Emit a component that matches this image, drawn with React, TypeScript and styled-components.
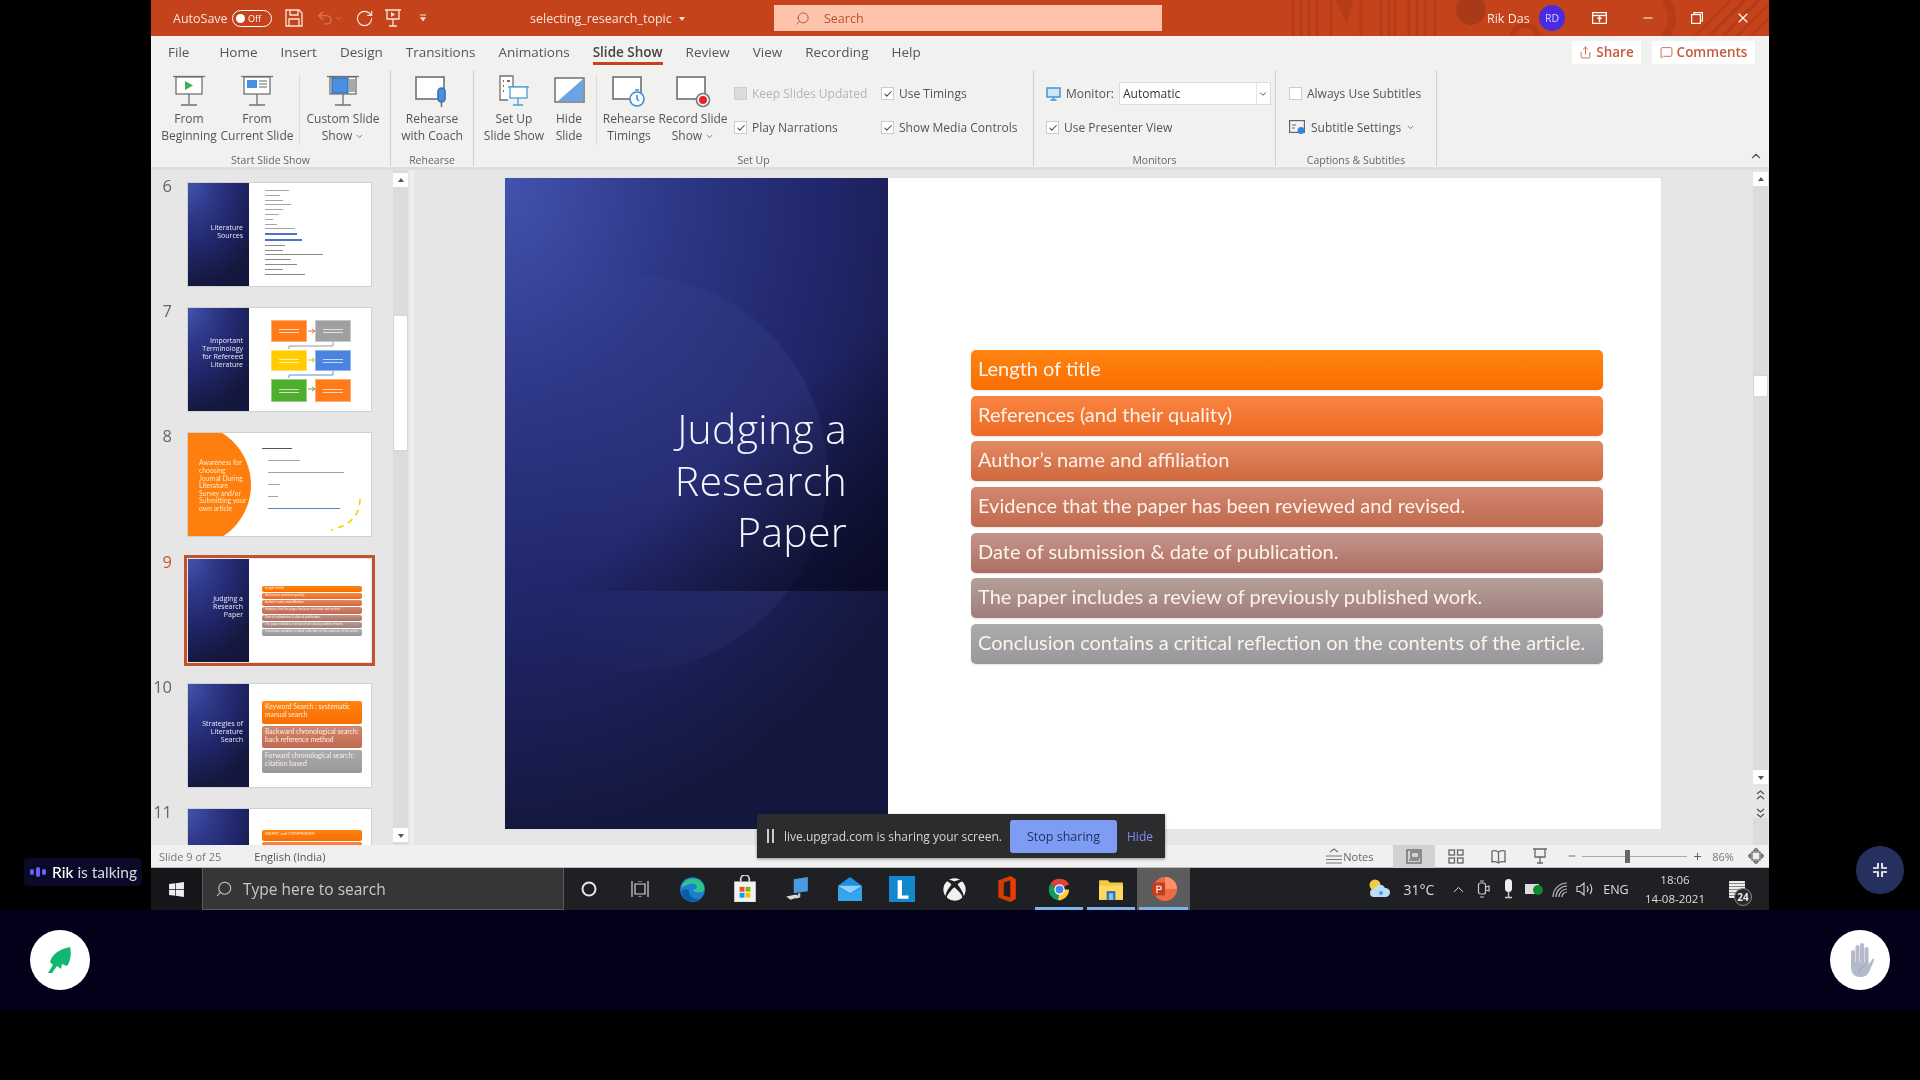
import styled, { createGlobalStyle } from "styled-components";
import { Search, Undo2, RotateCw, Minus, Plus, X, ChevronDown, ChevronUp, Check, MessageSquare, Share } from "lucide-react";
import { FaWindows, FaXbox } from "react-icons/fa";

const Global = createGlobalStyle`
  html, body { margin: 0; background: #000; overflow: hidden; }
  * { box-sizing: border-box; }
`;

const Screen = styled.div`
  width: 1920px;
  height: 1080px;
  background: #000;
  font-family: "Open Sans", "Liberation Sans", sans-serif;
  filter: blur(0.45px);
  overflow: hidden;
`;

const Stage = styled.div`
  display: flex;
  height: 910px;
`;

const Gutter = styled.div<{ $pad: number; $align: string }>`
  width: 151px;
  flex: none;
  display: flex;
  align-items: flex-end;
  justify-content: ${(p) => p.$align};
  padding: 0 ${(p) => (p.$align === "flex-end" ? "16px" : "0")} ${(p) => p.$pad}px 0;
`;

const Talking = styled.div`
  display: flex;
  align-items: center;
  gap: 6px;
  height: 28px;
  width: 118px;
  margin-left: 24px;
  padding-left: 6px;
  background: #0a0a28;
  border-radius: 4px;
  color: #d8d8e0;
  font: 400 15.5px Lato, sans-serif;
  white-space: nowrap;
  b { color: #fff; font-weight: 500; }
`;

const Dot = styled.i<{ $h: number }>`
  display: block;
  width: 4px;
  height: ${(p) => p.$h}px;
  border-radius: 3px;
  background: #6a63f5;
`;

const Dots = styled.span`
  display: flex;
  align-items: center;
  gap: 2px;
`;

const Collapse = styled.div`
  width: 48px;
  height: 48px;
  border-radius: 50%;
  background: #26305f;
  display: flex;
  align-items: center;
  justify-content: center;
`;

const Win = styled.div`
  width: 1618px;
  flex: none;
  display: flex;
  flex-direction: column;
  position: relative;
  background: #f1f1f0;
`;

/* title bar */
const TitleBar = styled.div`
  height: 36px;
  flex: none;
  position: relative;
  background: #c5431a;
  color: #f8e4dc;
  display: flex;
  align-items: center;
  font-size: 12.5px;
  padding-left: 22px;
  overflow: hidden;
`;

const Pattern = styled.svg`
  position: absolute;
  left: 1134px;
  top: 0;
`;

const AutoSave = styled.span`
  width: 59px;
`;

const Toggle = styled.span`
  width: 40px;
  height: 17px;
  border: 1.5px solid #fff;
  border-radius: 9px;
  display: flex;
  align-items: center;
  padding-left: 3px;
  gap: 3px;
  font-size: 9px;
  margin-right: 13px;
  color: #fff;
  &::before {
    content: "";
    width: 9px;
    height: 9px;
    border-radius: 50%;
    background: #fff;
  }
`;

const QatSlot = styled.span<{ $w: number; $dim?: boolean }>`
  width: ${(p) => p.$w}px;
  flex: none;
  display: flex;
  align-items: center;
  color: ${(p) => (p.$dim ? "#dc7f62" : "#f8e4dc")};
`;

const DocName = styled.span`
  margin-left: 104px;
  width: 244px;
  font-size: 12.5px;
  display: flex;
  align-items: center;
  gap: 7px;
  &::after {
    content: "";
    border: 3.5px solid transparent;
    border-top: 4px solid #f8e4dc;
    margin-top: 4px;
  }
`;

const SearchBox = styled.div`
  width: 388px;
  height: 26px;
  background: #fdc3ab;
  display: flex;
  align-items: center;
  gap: 14px;
  padding-left: 21px;
  color: #b8532f;
  font-size: 12.5px;
`;

const UserName = styled.span`
  margin-left: 325px;
  color: #fbe9e2;
  position: relative;
  font-size: 12.5px;
  width: 52px;
`;

const Avatar = styled.span`
  width: 26px;
  height: 26px;
  border-radius: 50%;
  background: #4a2be0;
  color: #d8d4ff;
  font-size: 10.5px;
  display: flex;
  align-items: center;
  justify-content: center;
  position: relative;
`;

const WinBtn = styled.span<{ $w: number }>`
  width: ${(p) => p.$w}px;
  display: flex;
  justify-content: flex-end;
  position: relative;
  color: #fff;
`;

/* tabs */
const Tabs = styled.div`
  height: 34px;
  flex: none;
  display: flex;
  align-items: center;
  padding: 0 0 2px 17px;
  gap: 23px;
  font-size: 13.5px;
  color: #4d4d4d;
  position: relative;
`;

const Tab = styled.span<{ $on?: boolean }>`
  position: relative;
  color: ${(p) => (p.$on ? "#444" : "#555")};
  font-weight: ${(p) => (p.$on ? 600 : 400)};
  &:first-child {
    margin-right: 7px;
  }
  ${(p) =>
    p.$on
      ? `&::after {
    content: "";
    position: absolute;
    left: 0;
    right: 0;
    bottom: -4px;
    height: 3px;
    background: #c5431a;
  }`
      : ""}
`;

const TabActions = styled.div`
  margin-left: auto;
  margin-right: 14px;
  display: flex;
  gap: 11px;
`;

const TabAction = styled.span<{ $w: number }>`
  width: ${(p) => p.$w}px;
  height: 23px;
  background: #fff;
  color: #c65a3c;
  font-weight: 600;
  font-size: 13.5px;
  display: flex;
  align-items: center;
  justify-content: center;
  gap: 4px;
`;

/* ribbon */
const Ribbon = styled.div`
  height: 100px;
  flex: none;
  display: flex;
  position: relative;
  font-size: 12px;
  color: #555;
  border-bottom: 3px solid #dedede;
`;

const Group = styled.div<{ $w: number }>`
  width: ${(p) => p.$w}px;
  flex: none;
  display: flex;
  flex-direction: column;
  height: 96px;
  border-right: 1px solid #cfcfcf;
`;

const GroupBody = styled.div<{ $pad: number }>`
  height: 83px;
  flex: none;
  display: flex;
  padding: 2px 0 0 ${(p) => p.$pad}px;
`;

const GroupName = styled.div`
  height: 13px;
  line-height: 15px;
  text-align: center;
  font-size: 10.5px;
  color: #666;
`;

const BigBtn = styled.div<{ $w: number }>`
  width: ${(p) => p.$w}px;
  flex: none;
  display: flex;
  flex-direction: column;
  align-items: center;
  white-space: nowrap;
`;

const BtnLabel = styled.div`
  text-align: center;
  line-height: 17px;
  svg {
    vertical-align: -1px;
  }
`;

const IconSlot = styled.div`
  height: 38px;
  padding-top: 3px;
`;

const Seam = styled.div<{ $m: number }>`
  width: 1px;
  height: 70px;
  margin: 3px ${(p) => p.$m}px 0 ${(p) => p.$m}px;
  background: #dcdcdc;
  flex: none;
`;

const CheckCols = styled.div<{ $shift?: number }>`
  display: flex;
  flex-direction: column;
  gap: 15px;
  padding-top: 12px;
  margin-left: ${(p) => p.$shift ?? 0}px;
`;

const CheckRow = styled.div`
  display: flex;
  height: 19px;
`;

const CheckItem = styled.label<{ $w?: number; $off?: boolean }>`
  display: flex;
  align-items: center;
  gap: 5px;
  height: 19px;
  white-space: nowrap;
  width: ${(p) => (p.$w ? `${p.$w}px` : "auto")};
  color: ${(p) => (p.$off ? "#b4b4b4" : "#555")};
`;

const Box = styled.span<{ $off?: boolean }>`
  width: 13px;
  height: 13px;
  flex: none;
  background: ${(p) => (p.$off ? "#dcdcdc" : "#fff")};
  border: 1px solid #cdcdcd;
  display: flex;
  align-items: center;
  justify-content: center;
  color: #444;
`;

const MonitorRow = styled.div`
  display: flex;
  align-items: center;
  gap: 5px;
  height: 23px;
  margin: -2px 0;
  color: #555;
`;

const Select = styled.div`
  width: 152px;
  height: 23px;
  background: #fff;
  border: 1px solid #dcdcdc;
  display: flex;
  align-items: center;
  justify-content: space-between;
  padding-left: 3px;
  color: #333;
`;

const SelectArrow = styled.span`
  width: 14px;
  height: 100%;
  border-left: 1px solid #e2e2e2;
  display: flex;
  align-items: center;
  justify-content: center;
`;

const RibbonChevron = styled.span`
  position: absolute;
  right: 6px;
  bottom: 0;
  color: #555;
`;

/* workspace */
const Workspace = styled.div`
  flex: 1;
  display: flex;
  min-height: 0;
  background: #e6e6e6;
`;

const ThumbPanel = styled.div`
  width: 263px;
  flex: none;
  display: flex;
  border-right: 4px solid #efefef;
`;

const ThumbList = styled.div`
  width: 242px;
  flex: none;
  padding-top: 13px;
  overflow: hidden;
`;

const ThumbRow = styled.div`
  display: flex;
  height: 125.2px;
`;

const ThumbNum = styled.div<{ $on?: boolean }>`
  width: 21px;
  margin: -4px 16px 0 0;
  text-align: right;
  font-size: 16.5px;
  line-height: 14px;
  color: ${(p) => (p.$on ? "#c5512d" : "#666")};
`;

const Thumb = styled.div<{ $on?: boolean }>`
  width: 183px;
  height: 103px;
  flex: none;
  display: flex;
  position: relative;
  background: #fff;
  outline: ${(p) => (p.$on ? "3px solid #c5512d" : "1px solid #d0d0d0")};
  outline-offset: ${(p) => (p.$on ? "1px" : "0")};
`;

const bluePanel = `
  background: radial-gradient(ellipse 130% 100% at 0 0, #4352ad 0, #2d3786 35%, #20266a 65%, #14183f 100%);
`;

const ThumbSide = styled.div<{ $top: number }>`
  width: 61px;
  flex: none;
  ${bluePanel}
  color: #e8eaf5;
  font-size: 7px;
  line-height: 8px;
  text-align: right;
  padding: ${(p) => p.$top}px 6px 0 2px;
`;

const ThumbBody = styled.div<{ $top: number; $left: number; $right: number; $gap?: number }>`
  flex: 1;
  display: flex;
  flex-direction: column;
  gap: ${(p) => p.$gap ?? 0}px;
  padding: ${(p) => p.$top}px ${(p) => p.$right}px 0 ${(p) => p.$left}px;
  overflow: hidden;
`;

const MiniLine = styled.i<{ $w: number; $h?: number; $c?: string; $indent?: number }>`
  display: block;
  flex: none;
  width: ${(p) => p.$w}px;
  height: ${(p) => p.$h ?? 1}px;
  margin-left: ${(p) => p.$indent ?? 0}px;
  background: ${(p) => p.$c ?? "#a4a4a4"};
`;

const MiniBar = styled.div<{ $top: string; $bottom: string; $h: number; $size: number }>`
  height: ${(p) => p.$h}px;
  flex: none;
  border-radius: 2px;
  background: linear-gradient(${(p) => p.$top}, ${(p) => p.$bottom});
  color: #fbeee6;
  font: 400 ${(p) => p.$size}px/1.25 Lato, sans-serif;
  padding: 1px 3px;
  overflow: hidden;
  white-space: ${(p) => (p.$size < 4 ? "nowrap" : "normal")};
`;

const FlowGrid = styled.div`
  display: grid;
  grid-template-columns: 36px 36px;
  grid-template-rows: 22px 21px 23px;
  gap: 8px;
`;

const FlowBox = styled.div<{ $c: string }>`
  background: ${(p) => p.$c};
  border: 1px solid #ffffff66;
  display: flex;
  flex-direction: column;
  align-items: center;
  justify-content: center;
  gap: 2px;
  &::before, &::after {
    content: "";
    width: 60%;
    height: 1px;
    background: #ffffffb0;
  }
`;

const FlowArrows = styled.svg`
  position: absolute;
  left: 83px;
  top: 12px;
`;

const OrangeShape = styled.div`
  width: 64px;
  flex: none;
  background: #ff7f0e;
  clip-path: circle(61.4px at 1.6px 51.5px);
  color: #ffe9cc;
  font: 400 6.8px/7.6px Lato, sans-serif;
  padding: 26px 0 0 11px;
  white-space: nowrap;
`;

const DashArc = styled.svg`
  position: absolute;
  right: 8px;
  bottom: 4px;
`;

const Scrollbar = styled.div<{ $gap?: number; $bottom: number; $top: number; $lift?: number }>`
  width: 15px;
  flex: none;
  display: flex;
  flex-direction: column;
  padding-top: ${(p) => p.$top}px;
  padding-bottom: ${(p) => p.$bottom}px;
  background: #dcdcdc;
  margin-left: ${(p) => p.$gap ?? 0}px;
  margin-top: ${(p) => -(p.$lift ?? 0)}px;
`;

const ScrollBtn = styled.div<{ $down?: boolean; $h?: number }>`
  height: ${(p) => p.$h ?? 14}px;
  flex: none;
  background: #fff;
  display: flex;
  align-items: center;
  justify-content: center;
  &::before {
    content: "";
    border: 3.5px solid transparent;
    ${(p) => (p.$down ? "border-top: 4px solid #555; margin-top: 4px;" : "border-bottom: 4px solid #555; margin-bottom: 4px;")}
  }
`;

const ScrollThumb = styled.div<{ $at: number; $size: number }>`
  margin-top: ${(p) => p.$at}px;
  height: ${(p) => p.$size}px;
  flex: none;
  background: #fff;
  border: 1px solid #d6d6d6;
`;

const ScrollFill = styled.div`
  flex: 1;
`;

const ScrollPair = styled.div`
  display: flex;
  flex-direction: column;
  gap: 8px;
  padding-top: 6px;
  background: #e6e6e6;
  align-items: center;
`;

const Editor = styled.div`
  flex: 1;
  display: flex;
  padding: 7px 1px 0 90px;
  min-width: 0;
`;

const Slide = styled.div`
  width: 1158px;
  height: 653px;
  flex: none;
  display: flex;
  background: #fff;
  border: 1px solid #e2e2e2;
`;

const SlideSide = styled.div`
  width: 383px;
  flex: none;
  position: relative;
  overflow: hidden;
  ${bluePanel}
  &::before {
    content: "";
    position: absolute;
    left: -74px;
    top: 97px;
    width: 396px;
    height: 396px;
    border-radius: 50%;
    background: linear-gradient(90deg, transparent 35%, rgba(120, 135, 220, 0.1) 100%);
  }
  &::after {
    content: "";
    position: absolute;
    left: 0;
    right: 0;
    top: 0;
    height: 413px;
    background: linear-gradient(140deg, transparent 62%, #090a24 100%);
  }
`;

const SlideTitle = styled.h1`
  position: relative;
  z-index: 1;
  margin: 0;
  padding: 225px 41px 0 0;
  text-align: right;
  color: #f4f5fb;
  font: 300 41px/51.5px "Open Sans", sans-serif;
  letter-spacing: 0.3px;
`;

const SlideBody = styled.div`
  flex: 1;
  display: flex;
  flex-direction: column;
  gap: 5.7px;
  padding: 172px 58px 0 83px;
`;

const Bar = styled.div<{ $top: string; $bottom: string }>`
  height: 40px;
  flex: none;
  border-radius: 5px;
  padding: 0 0 4px 7px;
  display: flex;
  align-items: center;
  background: linear-gradient(${(p) => p.$top}, ${(p) => p.$bottom});
  box-shadow: 0 1px 2px rgba(0, 0, 0, 0.12);
  color: #fdf3ec;
  font: 400 20px Lato, sans-serif;
`;

/* status bar */
const StatusBar = styled.div`
  height: 23px;
  flex: none;
  display: flex;
  align-items: center;
  padding-left: 8px;
  font-size: 11px;
  color: #777;
  background: #f0f0f0;
  border-bottom: 1px solid #bbb;
`;

const StatusLang = styled.span`
  margin-left: 33px;
  width: 1071px;
  color: #555;
`;

const Notes = styled.span`
  width: 68px;
  display: flex;
  align-items: center;
  color: #666;
`;

const ViewBtn = styled.span<{ $on?: boolean }>`
  width: 42px;
  height: 23px;
  display: flex;
  align-items: center;
  justify-content: center;
  background: ${(p) => (p.$on ? "#d2d2d2" : "transparent")};
  color: #666;
`;

const Zoomer = styled.div`
  display: flex;
  align-items: center;
  color: #555;
  gap: 5px;
  margin-left: 6px;
`;

const ZoomTrack = styled.span`
  width: 105px;
  height: 1px;
  background: #aaa;
  position: relative;
  &::after {
    content: "";
    position: absolute;
    left: 43px;
    top: -6px;
    width: 5px;
    height: 13px;
    background: #666;
  }
`;

const ZoomPct = styled.span`
  margin-left: 9px;
  width: 36px;
`;

/* taskbar */
const Taskbar = styled.div`
  height: 42px;
  flex: none;
  display: flex;
  align-items: stretch;
  background: #1f2023;
  color: #e0e0e0;
`;

const StartBtn = styled.div`
  width: 51px;
  display: flex;
  align-items: center;
  justify-content: center;
  background: #16171a;
`;

const TaskSearch = styled.div`
  width: 362px;
  display: flex;
  align-items: center;
  gap: 10px;
  padding-left: 12px;
  background: #373535;
  border: 1px solid #5a5a5a;
  border-top: none;
  color: #c9c9c9;
  font-size: 15.5px;
`;

const Pins = styled.div`
  display: flex;
`;

const Pin = styled.div<{ $w: number; $on?: boolean; $bar?: boolean }>`
  width: ${(p) => p.$w}px;
  flex: none;
  display: flex;
  align-items: center;
  justify-content: center;
  position: relative;
  background: ${(p) => (p.$on ? "#5c5c5c" : "transparent")};
  ${(p) =>
    p.$bar
      ? `&::after {
    content: "";
    position: absolute;
    left: 2px;
    right: 2px;
    bottom: 0;
    height: 3px;
    background: #7ab4ea;
  }`
      : ""}
`;

const Tray = styled.div`
  margin-left: auto;
  display: flex;
  align-items: center;
  padding-right: 24px;
  font-size: 14px;
  color: #dcdcdc;
`;

const TraySlot = styled.span<{ $w: number }>`
  width: ${(p) => p.$w}px;
  flex: none;
  display: flex;
  align-items: center;
  justify-content: center;
  white-space: nowrap;
`;

const EngLabel = styled(TraySlot)`
  font-size: 12.5px;
  padding-left: 4px;
`;

const Clock = styled.div`
  width: 90px;
  flex: none;
  text-align: center;
  font-size: 11.5px;
  line-height: 19px;
`;

const Badge = styled.span`
  position: absolute;
  right: -7px;
  bottom: -8px;
  width: 18px;
  height: 18px;
  border-radius: 50%;
  background: #2b2b2f;
  border: 1px solid #888;
  font-size: 10px;
  font-weight: 700;
  color: #eee;
  display: flex;
  align-items: center;
  justify-content: center;
`;

const NoteIcon = styled.span`
  position: relative;
  width: 16px;
  height: 17px;
  margin-left: 9px;
  background: repeating-linear-gradient(#eee 0 2px, #888 2px 3px);
  border-radius: 1px;
`;

/* share bar */
const ShareBar = styled.div`
  position: absolute;
  left: 606px;
  top: 814px;
  width: 408px;
  height: 44px;
  display: flex;
  align-items: center;
  background: #2c2c2e;
  box-shadow: 0 1px 3px rgba(0, 0, 0, 0.4);
  color: #d5d5d5;
  font-size: 12px;
  padding-left: 10px;
`;

const Pause = styled.span`
  width: 7px;
  height: 14px;
  border-left: 2px solid #ccc;
  border-right: 2px solid #ccc;
  margin-right: 10px;
`;

const ShareText = styled.span`
  width: 226px;
  white-space: nowrap;
`;

const StopBtn = styled.span`
  width: 107px;
  height: 33px;
  border-radius: 3px;
  background: #7f9cf5;
  color: #23305f;
  font-size: 12.5px;
  display: flex;
  align-items: center;
  justify-content: center;
`;

const HideLink = styled.span`
  margin-left: 10px;
  color: #7f8ff0;
  font-size: 12px;
`;

/* bottom band */
const Band = styled.div`
  height: 100px;
  background: #03001a;
  display: flex;
  align-items: center;
  justify-content: space-between;
  padding: 0 30px;
`;

const RoundBtn = styled.div`
  width: 60px;
  height: 60px;
  border-radius: 50%;
  background: #fff;
  display: flex;
  align-items: center;
  justify-content: center;
`;

const tabs = ["File", "Home", "Insert", "Design", "Transitions", "Animations", "Slide Show", "Review", "View", "Recording", "Help"];

const bars = [
  { text: "Length of title", top: "#ff8412", bottom: "#f96e00" },
  { text: "References (and their quality)", top: "#f98443", bottom: "#ee6a22" },
  { text: "Author’s name and affiliation", top: "#e28a62", bottom: "#d0673d" },
  { text: "Evidence that the paper has been reviewed and revised.", top: "#d38770", bottom: "#bf6a4f" },
  { text: "Date of submission & date of publication.", top: "#c5958b", bottom: "#ae6e62" },
  { text: "The paper includes a review of previously published work.", top: "#b3a199", bottom: "#a27d7a" },
  { text: "Conclusion contains a critical reflection on the contents of the article.", top: "#ababad", bottom: "#98989c" },
];

const listLines = [24, 15, 18, 26, 18, 14, 8, 12, 30];
const listLinesB = [20, 18, 58, 26, 32, 18, 40];

const Board = ({ children }: { children?: React.ReactNode }) => (
  <svg width="34" height="32" viewBox="0 0 34 32" fill="none" stroke="#707070" strokeWidth="1.3">
    <path d="M1 1.5h32" />
    <rect x="4" y="2" width="26" height="17" fill="#fff" />
    <path d="M17 19v11M9 30h16" />
    {children}
  </svg>
);

const Frame = ({ children }: { children?: React.ReactNode }) => (
  <svg width="36" height="34" viewBox="0 0 36 34" fill="none" stroke="#707070" strokeWidth="1.6">
    <rect x="2" y="2" width="28" height="22" fill="#fff" />
    {children}
  </svg>
);

const DoubleArrow = ({ down }: { down?: boolean }) => (
  <svg width="9" height="10" viewBox="0 0 9 10" fill="none" stroke="#555" strokeWidth="1.3">
    <path d={down ? "M1 1l3.500 3L8 1M1 6l3.500 3L8 6" : "M1 4l3.500-3L8 4M1 9l3.500-3L8 9"} />
  </svg>
);

const Chrome = () => (
  <svg width="25" height="25" viewBox="0 0 24 24">
    <path d="M12 12 3 7a10.500 10.500 0 0 1 18.200 0z" fill="#db4437" />
    <path d="M12 12 3 7a10.500 10.500 0 0 0 7.600 15.400z" fill="#0f9d58" />
    <path d="M12 12h9.200a10.500 10.500 0 0 1-10.600 10.400z" fill="#ffcd40" />
    <circle cx="12" cy="12" r="5" fill="#fff" />
    <circle cx="12" cy="12" r="3.800" fill="#4285f4" />
  </svg>
);

const Edge = () => (
  <svg width="27" height="27" viewBox="0 0 24 24">
    <circle cx="12" cy="12" r="11" fill="#1b7fd4" />
    <path d="M2 10C4 2 14 0 20 5c3 3 3 8 1 9-3 1-8 1-9-2 5 0 5-4 1-5-5-1-9 3-11 3z" fill="#2fc48d" />
    <path d="M9 14c0 4 4 7 9 6-5 5-14 3-16-6 2-3 7-3 7 0z" fill="#0c59a4" />
  </svg>
);

const Store = () => (
  <svg width="26" height="28" viewBox="0 0 24 26">
    <path d="M8 6V4a4 4 0 0 1 8 0v2" fill="none" stroke="#ddd" strokeWidth="1.6" />
    <rect x="2" y="6" width="20" height="19" fill="#f2f2f2" />
    <rect x="7" y="11" width="4.500" height="4.500" fill="#f25022" />
    <rect x="12.500" y="11" width="4.500" height="4.500" fill="#7fba00" />
    <rect x="7" y="16.500" width="4.500" height="4.500" fill="#00a4ef" />
    <rect x="12.500" y="16.500" width="4.500" height="4.500" fill="#ffb900" />
  </svg>
);

const MyPc = () => (
  <svg width="26" height="26" viewBox="0 0 24 24">
    <path d="M9 3 22 1v13L9 16z" fill="#4a9be0" />
    <path d="M14 16v3l-3 1" stroke="#ccc" strokeWidth="2" fill="none" />
    <path d="M2 19l9-2 4 2-9 3z" fill="#d8d8d8" />
  </svg>
);

const Mail = () => (
  <svg width="26" height="26" viewBox="0 0 24 24">
    <path d="M1 9 12 1l11 8v14H1z" fill="#1f8fe0" />
    <path d="M1 9l11 7 11-7" fill="#8ed0fb" />
    <path d="M1 10l11 7 11-7v13H1z" fill="#35a6ee" />
  </svg>
);

const Tile = () => (
  <svg width="26" height="26" viewBox="0 0 24 24">
    <rect width="24" height="24" fill="#1488cc" />
    <path d="M8 4h4v14h6v3H8z" fill="#fff" />
  </svg>
);

const Office = () => (
  <svg width="22" height="28" viewBox="0 0 20 26">
    <path d="M2 5 13 1l5 3v18l-5 3-11-4z" fill="#d83b01" />
    <path d="M13 1l5 3v18l-5 3z" fill="#eb3c00" />
    <path d="M7 7l6-2v16l-6-2z" fill="#1f2023" />
  </svg>
);

const Explorer = () => (
  <svg width="26" height="25" viewBox="0 0 24 23">
    <path d="M1 3h8l2 2h12v16H1z" fill="#f5c842" />
    <rect x="1" y="8" width="22" height="13" fill="#ffd95e" />
    <rect x="8" y="13" width="8" height="8" fill="#2a6fb5" />
    <rect x="10" y="15" width="4" height="6" fill="#8ec3ee" />
  </svg>
);

const PowerPoint = () => (
  <svg width="26" height="26" viewBox="0 0 24 24">
    <circle cx="13" cy="12" r="11" fill="#ed6c47" />
    <path d="M13 1a11 11 0 0 1 11 11H13z" fill="#ff8f6b" />
    <rect x="1" y="6" width="12" height="12" rx="1" fill="#c43e1c" />
    <path d="M5 9h3a2 2 0 0 1 0 4H6v3H5zm1 1v2h2a1 1 0 0 0 0-2z" fill="#fff" />
  </svg>
);

const RaisedHand = () => (
  <svg width="28" height="36" viewBox="0 0 28 36" fill="#b4bac9">
    <rect x="5" y="8" width="4" height="18" rx="2" />
    <rect x="9.500" y="3" width="4" height="22" rx="2" />
    <rect x="14" y="1" width="4" height="24" rx="2" />
    <rect x="18.500" y="5" width="4" height="20" rx="2" />
    <path d="M5 20h17.500v3l4-6c1-1.500 2.500 0 1.500 1.500L23 30c-2 4-5 5-9 5-6 0-9-4-9-10z" />
    <path d="M13 30c1-3 3-5 6-7" stroke="#8a91a3" strokeWidth="0.8" fill="none" />
  </svg>
);

export default function App() {
  return (
    <Screen>
      <Global />
      <Stage>
        <Gutter $pad={24} $align="flex-start">
          <Talking>
            <Dots>
              <Dot $h={6} />
              <Dot $h={10} />
              <Dot $h={6} />
            </Dots>
            <span>
              <b>Rik</b> is talking
            </span>
          </Talking>
        </Gutter>
        <Win>
          <TitleBar>
            <Pattern width="484" height="36" viewBox="0 0 484 36" fill="none">
              <g stroke="#b53c16" strokeWidth="3">
                <path d="M8 0v36M16 0v36M24 0v36M32 0v36M46 0v36M76 0v36M96 0v36M104 0v36M110 0v36M124 0v36M132 0v36M140 0v36M150 0v36" />
                <path d="M410 36 446 0M424 36 460 0M438 36 474 0M452 36 484 4M466 36 484 18" />
              </g>
              <path d="M50 0l12 24 6-24z" fill="#b53c16" />
              <circle cx="186" cy="10" r="15" fill="#a83a18" />
              <circle cx="240" cy="38" r="13" stroke="#b53c16" strokeWidth="5" />
              <path d="M380 0q14 18 0 36" stroke="#b53c16" strokeWidth="8" />
            </Pattern>
            <AutoSave>AutoSave</AutoSave>
            <Toggle>Off</Toggle>
            <QatSlot $w={31}>
              <svg width="18" height="18" viewBox="0 0 18 18" fill="none" stroke="currentColor" strokeWidth="1.3">
                <path d="M1 1h13l3 3v13H1z" />
                <path d="M5 1v5h8V1M4 17v-7h10v7" />
              </svg>
            </QatSlot>
            <QatSlot $w={39} $dim>
              <Undo2 size={18} strokeWidth={1.5} />
              <ChevronDown size={9} />
            </QatSlot>
            <QatSlot $w={30}>
              <RotateCw size={19} strokeWidth={1.5} />
            </QatSlot>
            <QatSlot $w={35}>
              <svg width="16" height="18" viewBox="0 0 16 18" fill="none" stroke="currentColor" strokeWidth="1.3">
                <path d="M0 1h16M2 1v9h12V1M8 10v7M4 17h8" />
                <path d="M6 3l4 2.500L6 8z" fill="currentColor" stroke="none" />
              </svg>
            </QatSlot>
            <QatSlot $w={6}>
              <svg width="7" height="8" viewBox="0 0 7 8" fill="currentColor">
                <path d="M0 0h7v1H0zM0 3h7L3.500 8z" />
              </svg>
            </QatSlot>
            <DocName>selecting_research_topic</DocName>
            <SearchBox>
              <Search size={15} strokeWidth={1.5} transform="scale(-1 1)" />
              Search
            </SearchBox>
            <UserName>Rik Das</UserName>
            <Avatar>RD</Avatar>
            <WinBtn $w={42}>
              <svg width="15" height="12" viewBox="0 0 15 12" fill="none" stroke="currentColor" strokeWidth="1.3">
                <rect x="0.600" y="0.600" width="13.800" height="10.800" />
                <path d="M0 3.500h15" />
                <path d="M7.500 10V5M5.500 7l2-2 2 2" />
              </svg>
            </WinBtn>
            <WinBtn $w={48}>
              <Minus size={14} />
            </WinBtn>
            <WinBtn $w={48}>
              <svg width="12" height="12" viewBox="0 0 12 12" fill="none" stroke="currentColor" strokeWidth="1.2">
                <rect x="0.600" y="2.600" width="8.800" height="8.800" />
                <path d="M3 2.500V.6h8.400V9H9.500" />
              </svg>
            </WinBtn>
            <WinBtn $w={48}>
              <X size={16} strokeWidth={1.6} />
            </WinBtn>
          </TitleBar>
          <Tabs>
            {tabs.map((t) => (
              <Tab key={t} $on={t === "Slide Show"}>
                {t}
              </Tab>
            ))}
            <TabActions>
              <TabAction $w={69}>
                <Share size={13} strokeWidth={1.6} />
                Share
              </TabAction>
              <TabAction $w={103}>
                <MessageSquare size={13} strokeWidth={1.6} />
                Comments
              </TabAction>
            </TabActions>
          </Tabs>
          <Ribbon>
            <Group $w={240}>
              <GroupBody $pad={5}>
                <BigBtn $w={66}>
                  <IconSlot>
                    <Board>
                      <path d="M13 6l8 4.500-8 4.500z" fill="#3fae5a" stroke="none" />
                    </Board>
                  </IconSlot>
                  <BtnLabel>
                    From
                    <br />
                    Beginning
                  </BtnLabel>
                </BigBtn>
                <BigBtn $w={70}>
                  <IconSlot>
                    <Board>
                      <rect x="7" y="5" width="10" height="8" fill="#4a90e2" stroke="none" />
                      <path d="M19 6h8M19 9h8M19 12h8" stroke="#999" />
                    </Board>
                  </IconSlot>
                  <BtnLabel>
                    From
                    <br />
                    Current Slide
                  </BtnLabel>
                </BigBtn>
                <Seam $m={7} />
                <BigBtn $w={72}>
                  <IconSlot>
                    <Board>
                      <rect x="6" y="3" width="16" height="15" fill="#4a90e2" stroke="#3a70b0" />
                      <rect x="23" y="4" width="6" height="13" fill="#a8a8a8" stroke="none" />
                    </Board>
                  </IconSlot>
                  <BtnLabel>
                    Custom Slide
                    <br />
                    Show <ChevronDown size={9} />
                  </BtnLabel>
                </BigBtn>
              </GroupBody>
              <GroupName>Start Slide Show</GroupName>
            </Group>
            <Group $w={83}>
              <GroupBody $pad={10}>
                <BigBtn $w={62}>
                  <IconSlot>
                    <Frame>
                      <rect x="24" y="13" width="7" height="14" rx="3.500" fill="#4a90e2" stroke="#3a70b0" />
                      <path d="M27.500 27v5" />
                    </Frame>
                  </IconSlot>
                  <BtnLabel>
                    Rehearse
                    <br />
                    with Coach
                  </BtnLabel>
                </BigBtn>
              </GroupBody>
              <GroupName>Rehearse</GroupName>
            </Group>
            <Group $w={560}>
              <GroupBody $pad={8}>
                <BigBtn $w={64}>
                  <IconSlot>
                    <svg width="34" height="32" viewBox="0 0 34 32" fill="none" stroke="#707070" strokeWidth="1.3">
                      <path d="M16 14V1H3v24h8" fill="#fff" />
                      <path d="M6 6h1M6 11h1M6 16h1M10 6h3" strokeWidth="2" />
                      <g stroke="#4aa0d8">
                        <path d="M11 12h21" />
                        <rect x="13" y="12" width="17" height="11" fill="#fff" />
                        <path d="M21 23v7M16 30h10" />
                      </g>
                    </svg>
                  </IconSlot>
                  <BtnLabel>
                    Set Up
                    <br />
                    Slide Show
                  </BtnLabel>
                </BigBtn>
                <BigBtn $w={46}>
                  <IconSlot>
                    <svg width="31" height="32" viewBox="0 0 31 32" fill="none" stroke="#707070" strokeWidth="1.5">
                      <rect x="1" y="3" width="29" height="24" fill="#fff" />
                      <path d="M29 4v22H4z" fill="#68a4e6" stroke="none" />
                    </svg>
                  </IconSlot>
                  <BtnLabel>
                    Hide
                    <br />
                    Slide
                  </BtnLabel>
                </BigBtn>
                <Seam $m={4} />
                <BigBtn $w={56}>
                  <IconSlot>
                    <Frame>
                      <circle cx="26" cy="24" r="7" fill="#fff" stroke="#3a90d8" />
                      <path d="M26 20v4l2 2M24 15h4" stroke="#3a90d8" />
                    </Frame>
                  </IconSlot>
                  <BtnLabel>
                    Rehearse
                    <br />
                    Timings
                  </BtnLabel>
                </BigBtn>
                <BigBtn $w={72}>
                  <IconSlot>
                    <Frame>
                      <circle cx="28" cy="25" r="6.500" fill="#fff" stroke="#777" />
                      <circle cx="28" cy="25" r="4" fill="#e8202a" stroke="none" />
                    </Frame>
                  </IconSlot>
                  <BtnLabel>
                    Record Slide
                    <br />
                    Show <ChevronDown size={9} />
                  </BtnLabel>
                </BigBtn>
                <CheckCols $shift={5}>
                  <CheckRow>
                    <CheckItem $w={147} $off>
                      <Box $off />
                      Keep Slides Updated
                    </CheckItem>
                    <CheckItem>
                      <Box>
                        <Check size={10} strokeWidth={2.5} />
                      </Box>
                      Use Timings
                    </CheckItem>
                  </CheckRow>
                  <CheckRow>
                    <CheckItem $w={147}>
                      <Box>
                        <Check size={10} strokeWidth={2.5} />
                      </Box>
                      Play Narrations
                    </CheckItem>
                    <CheckItem>
                      <Box>
                        <Check size={10} strokeWidth={2.5} />
                      </Box>
                      Show Media Controls
                    </CheckItem>
                  </CheckRow>
                </CheckCols>
              </GroupBody>
              <GroupName>Set Up</GroupName>
            </Group>
            <Group $w={242}>
              <GroupBody $pad={12}>
                <CheckCols>
                  <MonitorRow>
                    <svg width="15" height="14" viewBox="0 0 15 14" fill="none" stroke="#3a8fd8" strokeWidth="1.4">
                      <rect x="1" y="1" width="13" height="9" fill="#cfe6f8" />
                      <path d="M7.500 10v3M4.500 13h6" />
                    </svg>
                    Monitor:
                    <Select>
                      Automatic
                      <SelectArrow>
                        <ChevronDown size={10} />
                      </SelectArrow>
                    </Select>
                  </MonitorRow>
                  <CheckItem>
                    <Box>
                      <Check size={10} strokeWidth={2.5} />
                    </Box>
                    Use Presenter View
                  </CheckItem>
                </CheckCols>
              </GroupBody>
              <GroupName>Monitors</GroupName>
            </Group>
            <Group $w={161}>
              <GroupBody $pad={13}>
                <CheckCols>
                  <CheckItem>
                    <Box />
                    Always Use Subtitles
                  </CheckItem>
                  <CheckItem>
                    <svg width="17" height="15" viewBox="0 0 17 15" fill="none" stroke="#666" strokeWidth="1.2">
                      <rect x="0.600" y="0.600" width="14.800" height="11.800" fill="#f4f4f4" />
                      <path d="M3 5h4M3 8h3" />
                      <circle cx="12" cy="10.500" r="3.500" fill="#2f86e0" stroke="none" />
                    </svg>
                    Subtitle Settings <ChevronDown size={9} />
                  </CheckItem>
                </CheckCols>
              </GroupBody>
              <GroupName>Captions &amp; Subtitles</GroupName>
            </Group>
            <RibbonChevron>
              <ChevronUp size={14} />
            </RibbonChevron>
          </Ribbon>
          <Workspace>
            <ThumbPanel>
              <ThumbList>
                <ThumbRow>
                  <ThumbNum>6</ThumbNum>
                  <Thumb>
                    <ThumbSide $top={41}>
                      Literature
                      <br />
                      Sources
                    </ThumbSide>
                    <ThumbBody $top={7} $left={16} $right={4} $gap={3.8}>
                      {listLines.map((w, i) => (
                        <MiniLine key={i} $w={w} />
                      ))}
                      <MiniLine $w={32} $h={2} $c="#4a74c8" />
                      <MiniLine $w={37} $h={2} $c="#4a74c8" />
                      {listLinesB.map((w, i) => (
                        <MiniLine key={i} $w={w} $c="#8a8a8a" />
                      ))}
                    </ThumbBody>
                  </Thumb>
                </ThumbRow>
                <ThumbRow>
                  <ThumbNum>7</ThumbNum>
                  <Thumb>
                    <ThumbSide $top={29}>
                      Important
                      <br />
                      Terminology
                      <br />
                      for Refereed
                      <br />
                      Literature
                    </ThumbSide>
                    <ThumbBody $top={12} $left={22} $right={18}>
                      <FlowGrid>
                        <FlowBox $c="#ff7a1a" />
                        <FlowBox $c="#a0a0a0" />
                        <FlowBox $c="#ffcc00" />
                        <FlowBox $c="#4a84e0" />
                        <FlowBox $c="#4fae2e" />
                        <FlowBox $c="#ff7a1a" />
                      </FlowGrid>
                    </ThumbBody>
                    <FlowArrows width="80" height="80" viewBox="0 0 80 80" fill="none" strokeWidth="1">
                      <path d="M37 11h7M41 9l3 2-3 2" stroke="#e8743a" />
                      <path d="M62 22v4H18v3" stroke="#999" />
                      <path d="M37 40h7M41 38l3 2-3 2" stroke="#e8c020" />
                      <path d="M62 51v4H18v3" stroke="#5a90e0" />
                      <path d="M37 69h7M41 67l3 2-3 2" stroke="#5aaf3a" />
                    </FlowArrows>
                  </Thumb>
                </ThumbRow>
                <ThumbRow>
                  <ThumbNum>8</ThumbNum>
                  <Thumb>
                    <OrangeShape>
                      Awareness for
                      <br />
                      choosing
                      <br />
                      Journal During
                      <br />
                      Literature
                      <br />
                      Survey and/or
                      <br />
                      Submitting your
                      <br />
                      own article
                    </OrangeShape>
                    <ThumbBody $top={15} $left={10} $right={4} $gap={11}>
                      <MiniLine $w={30} $c="#555" />
                      <MiniLine $w={32} $indent={6} />
                      <MiniLine $w={76} $indent={6} />
                      <MiniLine $w={12} $indent={6} />
                      <MiniLine $w={10} $indent={6} />
                      <MiniLine $w={72} $indent={6} $c="#5a7fd0" />
                    </ThumbBody>
                    <DashArc width="34" height="34" viewBox="0 0 34 34" fill="none" stroke="#f5d000" strokeWidth="1.6">
                      <path d="M31 1q0 24-29 31" strokeDasharray="6 5" />
                    </DashArc>
                  </Thumb>
                </ThumbRow>
                <ThumbRow>
                  <ThumbNum $on>9</ThumbNum>
                  <Thumb $on>
                    <ThumbSide $top={36}>
                      Judging a
                      <br />
                      Research
                      <br />
                      Paper
                    </ThumbSide>
                    <ThumbBody $top={27} $left={13} $right={9} $gap={1}>
                      {bars.map((b) => (
                        <MiniBar key={b.text} $top={b.top} $bottom={b.bottom} $h={6.3} $size={3.1}>
                          {b.text}
                        </MiniBar>
                      ))}
                    </ThumbBody>
                  </Thumb>
                </ThumbRow>
                <ThumbRow>
                  <ThumbNum>10</ThumbNum>
                  <Thumb>
                    <ThumbSide $top={36}>
                      Strategies of
                      <br />
                      Literature
                      <br />
                      Search
                    </ThumbSide>
                    <ThumbBody $top={17} $left={13} $right={9} $gap={2}>
                      <MiniBar $top="#ff8412" $bottom="#f96e00" $h={23} $size={6.8}>
                        Keyword Search : systematic manual search
                      </MiniBar>
                      <MiniBar $top="#d38770" $bottom="#bf6a4f" $h={22} $size={6.8}>
                        Backward chronological search: back reference method
                      </MiniBar>
                      <MiniBar $top="#ababad" $bottom="#98989c" $h={23} $size={6.8}>
                        Forward chronological search: citation based
                      </MiniBar>
                    </ThumbBody>
                  </Thumb>
                </ThumbRow>
                <ThumbRow>
                  <ThumbNum>11</ThumbNum>
                  <Thumb>
                    <ThumbSide $top={40} />
                    <ThumbBody $top={21} $left={13} $right={9} $gap={1}>
                      <MiniBar $top="#ff8412" $bottom="#f96e00" $h={11} $size={4.2}>
                        INSPEC and COMPENDEX
                      </MiniBar>
                      <MiniBar $top="#f98443" $bottom="#ee6a22" $h={11} $size={4.2} />
                    </ThumbBody>
                  </Thumb>
                </ThumbRow>
              </ThumbList>
              <Scrollbar $top={3} $bottom={3}>
                <ScrollBtn />
                <ScrollThumb $at={128} $size={136} />
                <ScrollFill />
                <ScrollBtn $down />
              </Scrollbar>
            </ThumbPanel>
            <Editor>
              <Slide>
                <SlideSide>
                  <SlideTitle>
                    Judging a
                    <br />
                    Research
                    <br />
                    Paper
                  </SlideTitle>
                </SlideSide>
                <SlideBody>
                  {bars.map((b) => (
                    <Bar key={b.text} $top={b.top} $bottom={b.bottom}>
                      {b.text}
                    </Bar>
                  ))}
                </SlideBody>
              </Slide>
              <Scrollbar $gap={91} $top={0} $bottom={27} $lift={5}>
                <ScrollBtn />
                <ScrollThumb $at={189} $size={22} />
                <ScrollFill />
                <ScrollBtn $down />
                <ScrollPair>
                  <DoubleArrow />
                  <DoubleArrow down />
                </ScrollPair>
              </Scrollbar>
            </Editor>
          </Workspace>
          <StatusBar>
            Slide 9 of 25
            <StatusLang>English (India)</StatusLang>
            <Notes>
              <svg width="18" height="18" viewBox="0 0 18 18" fill="none" stroke="#777" strokeWidth="1.2">
                <path d="M5 5l4-3 4 3M1 9h16M1 12.500h16M1 16h16" />
              </svg>
              Notes
            </Notes>
            <ViewBtn $on>
              <svg width="16" height="15" viewBox="0 0 16 15" fill="none" stroke="#666" strokeWidth="1.3">
                <rect x="1" y="1" width="14" height="13" />
                <rect x="5" y="3" width="8" height="6" />
                <path d="M3 11h10" />
              </svg>
            </ViewBtn>
            <ViewBtn>
              <svg width="16" height="15" viewBox="0 0 16 15" fill="none" stroke="#666" strokeWidth="1.3">
                <rect x="1" y="1" width="5.500" height="5" />
                <rect x="9.500" y="1" width="5.500" height="5" />
                <rect x="1" y="9" width="5.500" height="5" />
                <rect x="9.500" y="9" width="5.500" height="5" />
              </svg>
            </ViewBtn>
            <ViewBtn>
              <svg width="15" height="15" viewBox="0 0 15 15" fill="none" stroke="#666" strokeWidth="1.3">
                <path d="M1 2q3-1 6.500 1Q11 1 14 2v11q-3-1-6.500 1Q4 12 1 13zM7.500 3v11" />
              </svg>
            </ViewBtn>
            <ViewBtn>
              <svg width="14" height="16" viewBox="0 0 14 16" fill="none" stroke="#666" strokeWidth="1.3">
                <path d="M0 1h14M2 1v8h10V1M7 9v6M4 15h6" />
              </svg>
            </ViewBtn>
            <Zoomer>
              <Minus size={10} />
              <ZoomTrack />
              <Plus size={11} />
            </Zoomer>
            <ZoomPct>86%</ZoomPct>
            <svg width="16" height="16" viewBox="0 0 16 16" fill="none" stroke="#666" strokeWidth="1.2">
              <rect x="4" y="4" width="8" height="8" />
              <path d="M8 0l2 2.500H6zM8 16l2-2.500H6zM0 8l2.500 2v-4zM16 8l-2.500 2v-4z" />
            </svg>
          </StatusBar>
          <Taskbar>
            <StartBtn>
              <FaWindows size={17} color="#eee" />
            </StartBtn>
            <TaskSearch>
              <Search size={18} strokeWidth={1.4} transform="scale(-1 1)" />
              Type here to search
            </TaskSearch>
            <Pins>
              <Pin $w={50}>
                <svg width="16" height="16" viewBox="0 0 16 16" fill="none" stroke="#e8e8e8" strokeWidth="2">
                  <circle cx="8" cy="8" r="6.500" />
                </svg>
              </Pin>
              <Pin $w={52}>
                <svg width="18" height="16" viewBox="0 0 18 16" fill="none" stroke="#d8d8d8" strokeWidth="1.2">
                  <path d="M1 0v16M17 0v16M4 3h10v10H4zM7 0h4M7 16h4" />
                </svg>
              </Pin>
              <Pin $w={52.5}>
                <Edge />
              </Pin>
              <Pin $w={52.5}>
                <Store />
              </Pin>
              <Pin $w={52.5}>
                <MyPc />
              </Pin>
              <Pin $w={52.5}>
                <Mail />
              </Pin>
              <Pin $w={52}>
                <Tile />
              </Pin>
              <Pin $w={53}>
                <FaXbox size={23} color="#f2f2f2" />
              </Pin>
              <Pin $w={52}>
                <Office />
              </Pin>
              <Pin $w={52} $bar>
                <Chrome />
              </Pin>
              <Pin $w={52} $bar>
                <Explorer />
              </Pin>
              <Pin $w={53} $on $bar>
                <PowerPoint />
              </Pin>
            </Pins>
            <Tray>
              <TraySlot $w={26}>
                <svg width="24" height="20" viewBox="0 0 24 20">
                  <circle cx="7" cy="6" r="5.500" fill="#f5c842" />
                  <path d="M6 18a4 4 0 0 1 0-8 6 6 0 0 1 11-1 4.500 4.500 0 0 1 1 9z" fill="#bcdcf8" />
                  <circle cx="13" cy="14" r="2" fill="#4aa0e8" />
                </svg>
              </TraySlot>
              <TraySlot $w={52}>31°C</TraySlot>
              <TraySlot $w={26}>
                <ChevronUp size={17} strokeWidth={1.4} />
              </TraySlot>
              <TraySlot $w={25}>
                <svg width="13" height="18" viewBox="0 0 13 18" fill="none" stroke="#ccc" strokeWidth="1.2">
                  <rect x="1.500" y="3" width="7" height="11" rx="2" />
                  <path d="M9 7l3-1v5l-3-1M3 1h4M3 17h4" />
                </svg>
              </TraySlot>
              <TraySlot $w={25}>
                <svg width="11" height="20" viewBox="0 0 11 20">
                  <rect x="2" y="0" width="7" height="13" rx="3.500" fill="#eee" />
                  <path d="M5.500 13v5M2 18.500h7" stroke="#ccc" strokeWidth="1.4" />
                </svg>
              </TraySlot>
              <TraySlot $w={26}>
                <svg width="18" height="14" viewBox="0 0 18 14">
                  <rect y="2" width="14" height="10" fill="#ddd" />
                  <circle cx="13" cy="8" r="5" fill="#0d8a2e" />
                </svg>
              </TraySlot>
              <TraySlot $w={25}>
                <svg width="16" height="15" viewBox="0 0 16 15" fill="none" stroke="#bbb" strokeWidth="1.2">
                  <path d="M1 15A14 14 0 0 1 15 1M4 15A11 11 0 0 1 15 4M7 15a8 8 0 0 1 8-8M10 15a5 5 0 0 1 5-5" />
                </svg>
              </TraySlot>
              <TraySlot $w={26}>
                <svg width="18" height="16" viewBox="0 0 18 16" fill="none" stroke="#ccc" strokeWidth="1.2">
                  <path d="M1 5.500h3L8 2v12L4 10.500H1zM11 5q2 3 0 6M14 3q3.500 5 0 10" />
                </svg>
              </TraySlot>
              <EngLabel $w={32}>ENG</EngLabel>
              <Clock>
                18:06
                <br />
                14-08-2021
              </Clock>
              <NoteIcon>
                <Badge>24</Badge>
              </NoteIcon>
            </Tray>
          </Taskbar>
          <ShareBar>
            <Pause />
            <ShareText>live.upgrad.com is sharing your screen.</ShareText>
            <StopBtn>Stop sharing</StopBtn>
            <HideLink>Hide</HideLink>
          </ShareBar>
        </Win>
        <Gutter $pad={16} $align="flex-end">
          <Collapse>
            <svg width="14" height="14" viewBox="0 0 14 14" fill="none" stroke="#fff" strokeWidth="1.7">
              <path d="M5 0v5H0M9 0v5h5M5 14V9H0M9 14V9h5" />
            </svg>
          </Collapse>
        </Gutter>
      </Stage>
      <Band>
        <RoundBtn>
          <svg width="24" height="26" viewBox="0 0 24 26" fill="#12b76f">
            <path d="M22 0c2 8 0 15-3 19l-5-2-1 5-4-3-5 7h-4l5-8 -3-3c2-8 10-13 20-15z" />
          </svg>
        </RoundBtn>
        <RoundBtn>
          <RaisedHand />
        </RoundBtn>
      </Band>
    </Screen>
  );
}
